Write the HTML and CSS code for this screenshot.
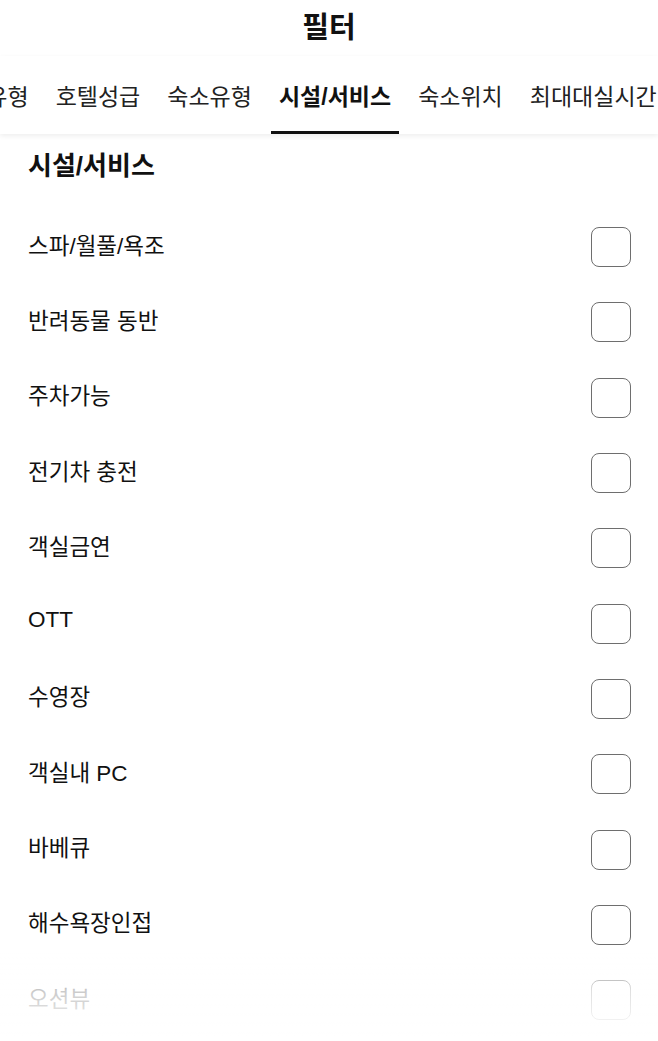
FILE: index.html
```html
<!DOCTYPE html>
<html lang="ko">
<head>
  <meta charset="UTF-8" />
  <meta name="viewport" content="width=device-width, initial-scale=1.0" />
  <title>필터</title>
  <link rel="stylesheet" href="styles.css">
</head>
<body>
  <header class="topbar">필터</header>

  <nav class="tabs">
    <div class="tab-list">
      <div class="tab">객실유형</div>
      <div class="tab">호텔성급</div>
      <div class="tab">숙소유형</div>
      <div class="tab active">시설/서비스</div>
      <div class="tab">숙소위치</div>
      <div class="tab">최대대실시간</div>
    </div>
  </nav>

  <section class="section">
    <h2 class="section-title">시설/서비스</h2>
    <ul class="options">
      <li class="option"><span class="label">스파/월풀/욕조</span><span class="check"></span></li>
      <li class="option"><span class="label">반려동물 동반</span><span class="check"></span></li>
      <li class="option"><span class="label">주차가능</span><span class="check"></span></li>
      <li class="option"><span class="label">전기차 충전</span><span class="check"></span></li>
      <li class="option"><span class="label">객실금연</span><span class="check"></span></li>
      <li class="option"><span class="label">OTT</span><span class="check"></span></li>
      <li class="option"><span class="label">수영장</span><span class="check"></span></li>
      <li class="option"><span class="label">객실내 PC</span><span class="check"></span></li>
      <li class="option"><span class="label">바베큐</span><span class="check"></span></li>
      <li class="option"><span class="label">해수욕장인접</span><span class="check"></span></li>
      <li class="option"><span class="label">오션뷰</span><span class="check"></span></li>
    </ul>
  </section>

  <div class="fade"></div>
</body>
</html>
```

FILE: styles.css
```css
html, body {
  height: 100%;
  overflow: hidden;
}
body {
  font-family: "Liberation Sans", "Noto Sans CJK KR", sans-serif;
  margin: 0;
  background: #fff;
  color: #111;
}
.topbar {
  height: 56px;
  line-height: 56px;
  text-align: center;
  font-size: 29px;
  font-weight: bold;
  color: #111;
}
.tabs {
  height: 78px;
  overflow: hidden;
  position: relative;
  box-shadow: 0 2px 5px rgba(0,0,0,0.07);
}
.tab-list {
  display: flex;
  gap: 11px;
  margin-left: -64px;
  height: 100%;
  white-space: nowrap;
}
.tab {
  display: flex;
  align-items: center;
  padding: 2px 8px 0;
  font-size: 23px;
  color: #222;
  border-bottom: 3px solid transparent;
  box-sizing: border-box;
}
.tab.active {
  font-weight: bold;
  color: #111;
  border-bottom-color: #111;
}
.section {
  padding: 16px 27px 0 28px;
}
.section-title {
  margin: 0 0 27px;
  font-size: 26px;
  line-height: 32px;
  font-weight: bold;
  color: #111;
}
.options {
  list-style: none;
  margin: 0;
  padding: 0;
}
.option {
  height: 75.3px;
  display: flex;
  align-items: center;
  justify-content: space-between;
  font-size: 22.5px;
  color: #111;
}
.label {
  padding-bottom: 6px;
}
.check {
  width: 38px;
  height: 38px;
  border: 1.5px solid #6e6e6e;
  border-radius: 8px;
  margin-top: 1px;
}
.fade {
  position: fixed;
  left: 0;
  right: 0;
  bottom: 0;
  height: 92px;
  background: linear-gradient(rgba(255,255,255,0), rgba(255,255,255,0.78) 45%, #fff 100%);
  pointer-events: none;
}
```
